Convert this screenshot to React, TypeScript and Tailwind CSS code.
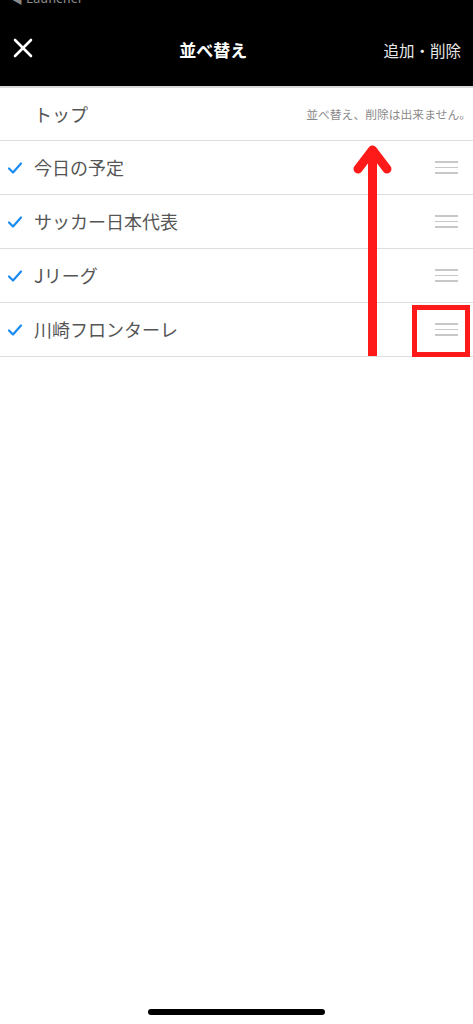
import React from "react";

const items = ["今日の予定", "サッカー日本代表", "Jリーグ", "川崎フロンターレ"];

function Check() {
  return (
    <svg width="16" height="14" viewBox="0 0 16 14" className="shrink-0">
      <path d="M2 7.5 L6 11.5 L14 2.5" fill="none" stroke="#1a8cf0" strokeWidth="2.2" strokeLinecap="round" strokeLinejoin="round" />
    </svg>
  );
}

function Handle() {
  return (
    <div className="flex w-[23px] flex-col gap-[4px]">
      <div className="h-[1.5px] bg-[#c8c8c8]" />
      <div className="h-[1.5px] bg-[#c8c8c8]" />
      <div className="h-[1.5px] bg-[#c8c8c8]" />
    </div>
  );
}

export default function App() {
  return (
    <div className="relative min-h-[1024px] w-full overflow-hidden bg-white font-['Noto_Sans_CJK_JP',sans-serif]">
      <header className="relative flex h-[86px] items-end bg-black pb-[24px] pl-[13px] pr-[12px]">
        <span className="absolute left-[10px] top-[-12px] text-[13px] text-[#8a8a8a]">◀ Launcher</span>
        <svg width="20" height="20" viewBox="0 0 20 20" className="mb-[4px]">
          <path d="M2 2 L18 18 M18 2 L2 18" stroke="#fff" strokeWidth="2.6" strokeLinecap="round" />
        </svg>
        <h1 className="flex-1 pl-[10px] text-center text-[17px] font-bold leading-[24px] text-white">並べ替え</h1>
        <button className="text-[15.5px] leading-[24px] text-[#e8e8e8]">追加・削除</button>
      </header>
      <div className="h-[2px] bg-[#d9d9d9]" />
      <div className="flex h-[53px] items-center justify-between border-b border-[#dedede] pl-[34px] pr-[2px]">
        <span className="text-[18px] text-[#555]">トップ</span>
        <span className="text-[11.8px] text-[#8a8a8a]">並べ替え、削除は出来ません。</span>
      </div>
      {items.map((label) => (
        <div key={label} className="flex h-[54px] items-center border-b border-[#dedede] pl-[7px] pr-[15px]">
          <Check />
          <span className="ml-[11px] flex-1 text-[18px] text-[#555]">{label}</span>
          <Handle />
        </div>
      ))}

      <svg className="absolute left-[350px] top-[140px]" width="46" height="220" viewBox="0 0 46 220">
        <path d="M22.5 216 L22.5 12" stroke="#ff1a1a" strokeWidth="9" strokeLinecap="butt" />
        <path d="M8 29 L22.5 10 L37 29" fill="none" stroke="#ff1a1a" strokeWidth="9" strokeLinecap="round" strokeLinejoin="round" />
      </svg>
      <div className="absolute left-[412px] top-[305px] h-[52px] w-[58px] border-[5px] border-[#ff1a1a]" />

      <div className="absolute bottom-[9px] left-[148px] h-[6px] w-[177px] rounded-full bg-black" />
    </div>
  );
}
